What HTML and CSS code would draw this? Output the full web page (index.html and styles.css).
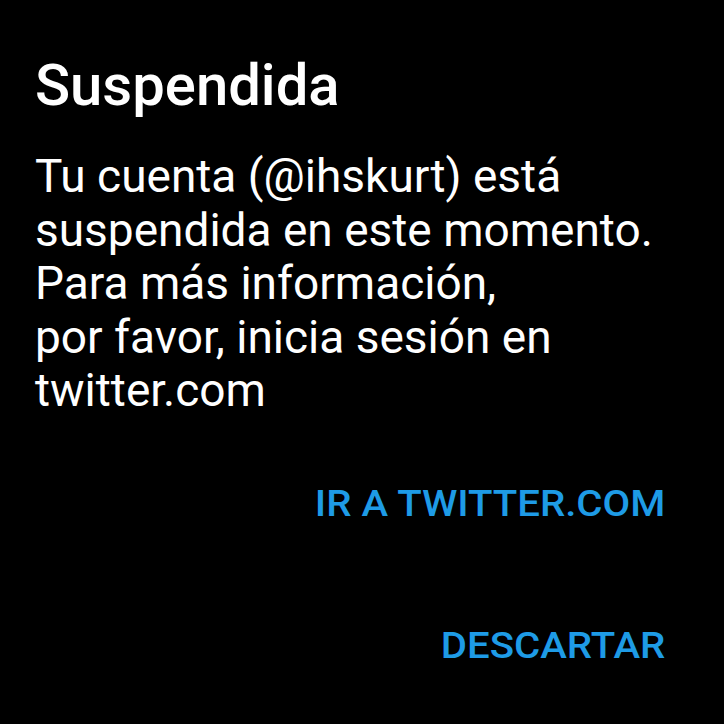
FILE: index.html
```html
<!DOCTYPE html>
<html lang="es">
<head>
<meta charset="utf-8">
<title>Suspendida</title>
<link rel="stylesheet" href="styles.css">
</head>
<body>
<main class="dialog">
  <h1 class="title">Suspendida</h1>
  <p class="message">Tu cuenta (@ihskurt) está<br>suspendida en este momento.<br>Para más información,<br>por favor, inicia sesión en<br>twitter.com</p>
  <div class="actions">
    <button class="action action-primary">IR A TWITTER.COM</button>
    <button class="action action-dismiss">DESCARTAR</button>
  </div>
</main>
</body>
</html>
```
FILE: styles.css
```css
html, body {
  margin: 0;
  padding: 0;
  background: #000;
}
body {
  width: 724px;
  height: 724px;
  overflow: hidden;
  font-family: Roboto, "Noto Sans", sans-serif;
  color: #fff;
}
.dialog {
  display: flex;
  flex-direction: column;
  padding: 51px 59px 0 35px;
}
.title {
  margin: 0;
  font-size: 58px;
  line-height: 68px;
  font-weight: 500;
}
.message {
  margin: 31px 0 0;
  font-size: 46px;
  line-height: 53.5px;
  font-weight: 400;
}
.actions {
  display: flex;
  flex-direction: column;
  align-items: flex-end;
  gap: 102px;
  margin-top: 66px;
}
.action {
  background: none;
  border: none;
  padding: 0;
  margin: 0;
  font-family: Roboto, "Noto Sans", sans-serif;
  font-size: 36px;
  line-height: 40px;
  font-weight: 500;
  color: #1e9be6;
  letter-spacing: 0;
  transform: scaleX(1.115);
  transform-origin: right center;
}
```
